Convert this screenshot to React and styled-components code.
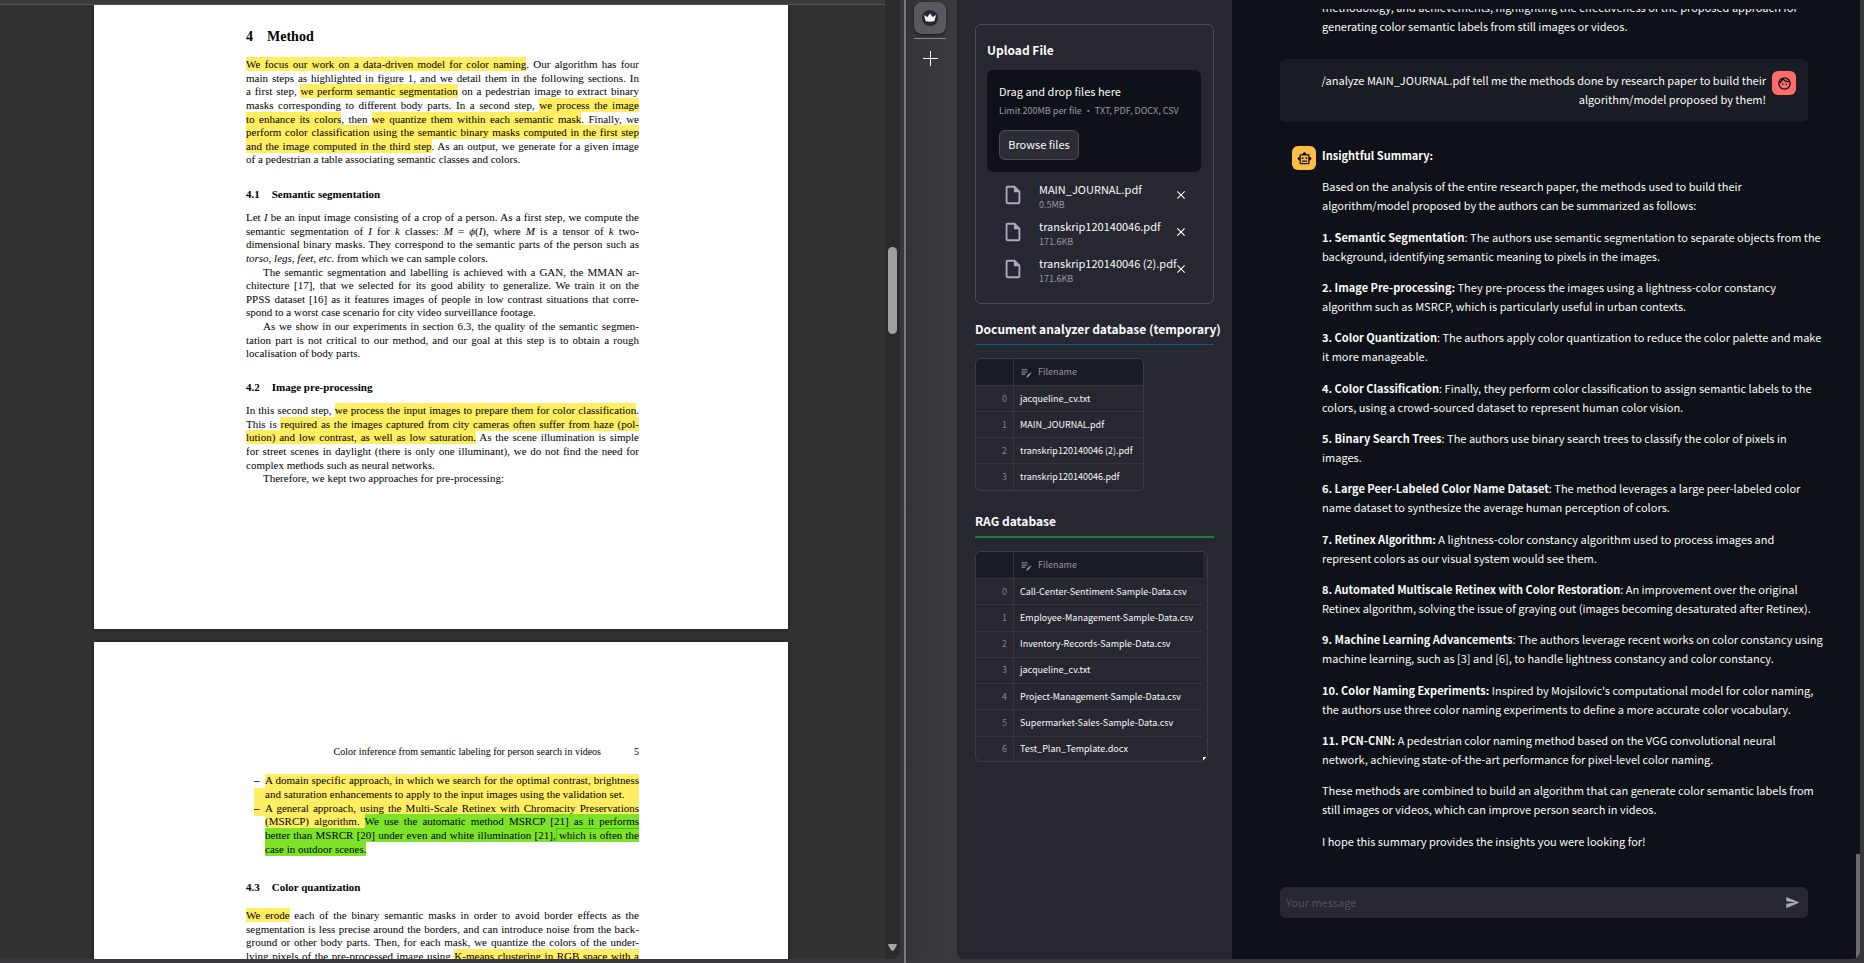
import React from "react";
import styled, { createGlobalStyle, css } from "styled-components";
import {
  MdClose,
  MdEditNote,
  MdOutlineFace,
  MdOutlineInsertDriveFile,
  MdOutlineSmartToy,
  MdSend,
} from "react-icons/md";

const GlobalStyle = createGlobalStyle`
  *, *::before, *::after { box-sizing: border-box; }
  body { margin: 0; background: #38383c; }
  h1, h2, h3, p, ul { margin: 0; padding: 0; }
  ul { list-style: none; }
  button, input { font: inherit; color: inherit; }
`;

const sans = `"Noto Sans CJK SC", "Source Sans Pro", sans-serif`;
const serif = `"Liberation Serif", "Times New Roman", serif`;

const Desktop = styled.div`
  display: grid;
  grid-template-columns: 904fr 2px 958fr;
  height: 100vh;
  overflow: hidden;
  background: #38383c;
`;

/* ---------- PDF viewer ---------- */

const Viewer = styled.section`
  display: flex;
  min-width: 0;
  min-height: 0;
  padding: 0 4px 4px 0;
`;

const ViewerColumn = styled.div`
  flex: 1;
  min-width: 0;
  display: flex;
  flex-direction: column;
  overflow: hidden;
  background: #323232;
`;

const ViewerToolbarEdge = styled.div`
  flex: none;
  height: 5px;
  background: #3b3b3b;
  border-bottom: 1px solid #525252;
`;

const Papers = styled.div`
  flex: 1;
  min-height: 0;
  overflow: hidden;
  display: flex;
  flex-direction: column;
  align-items: center;
  gap: 13px;
  padding-right: 3px;
`;

const Paper = styled.article`
  flex: none;
  width: 694px;
  max-width: 100%;
  padding: ${(p) => p.$pad};
  background: #fff;
  box-shadow: 0 0 5px rgba(0, 0, 0, 0.45);
  font-family: ${serif};
  font-size: 11px;
  line-height: 13px;
  color: #000;
`;

const Heading = styled.h2`
  display: flex;
  gap: ${(p) => (p.$large ? 14 : 12)}px;
  font-size: ${(p) => (p.$large ? 14 : 11)}px;
  line-height: ${(p) => (p.$large ? 16 : 13)}px;
  font-weight: 700;
`;

const TextBlock = styled.div`
  display: flex;
  flex-direction: column;
  justify-content: space-between;
  min-height: ${(p) => p.$height}px;
  margin: ${(p) => p.$margin};
`;

const Line = styled.div`
  white-space: nowrap;
  flex: 1;
  text-align-last: ${(p) => (p.$ragged ? "left" : "justify")};
  padding-left: ${(p) => (p.$indent ? 17 : 0)}px;
`;

const Mark = styled.mark`
  padding: 1px 0;
  color: #000;
  background: ${(p) => (p.$green ? "#7de328" : "#ffee62")};
  ${(p) =>
    p.$outlined &&
    css`
      box-shadow: inset 1px 1px #38cc1c;
    `}
`;

const RunningHead = styled.div`
  display: flex;
  justify-content: flex-end;
  gap: 33px;
  font-size: 10px;
`;

const ListLine = styled.div`
  display: flex;
  margin-left: 8px;
`;

const Dash = styled.span`
  flex: none;
  width: 11px;
  font-weight: 700;
  ${(p) =>
    p.$marked &&
    css`
      background: #ffee62;
      box-shadow: 0 1px #ffee62;
    `}
`;

const ListText = styled(Line)`
  ${(p) =>
    p.$filled &&
    css`
      background: #ffee62;
      box-shadow: 0 1px #ffee62;
    `}
`;

const ScrollTrack = styled.div`
  flex: none;
  width: 15px;
  display: flex;
  flex-direction: column;
  justify-content: space-between;
  align-items: center;
  padding: 247px 0 8px;
  background: #2b2b2b;
  border-radius: 0 0 8px 0;
`;

const ScrollThumb = styled.div`
  width: 9px;
  height: 87px;
  border-radius: 5px;
  background: #9f9f9f;
`;

const Divider = styled.div`
  background: #7b7a78;
`;

/* ---------- Side rail ---------- */

const Browser = styled.section`
  display: flex;
  min-width: 0;
  min-height: 0;
  padding: 0 4px 4px 0;
`;

const Rail = styled.nav`
  flex: none;
  width: 51px;
  display: flex;
  flex-direction: column;
  align-items: center;
  padding: 2px 3px 0 0;
  background: linear-gradient(90deg, #333437, #3a3b3e);
`;

const RailTab = styled.button`
  display: flex;
  align-items: center;
  justify-content: center;
  width: 32px;
  height: 32px;
  padding: 0;
  border: 0;
  border-radius: 8px;
  background: #58595e;
  box-shadow: 0 1px 3px rgba(0, 0, 0, 0.6);
`;

const RailRule = styled.div`
  width: 32px;
  height: 1px;
  margin: 4px 0 12px;
  background: #8b8b8d;
`;

const RailAdd = styled.button`
  display: flex;
  padding: 0;
  border: 0;
  background: none;
`;

/* ---------- Sidebar ---------- */

const AppFrame = styled.div`
  flex: 1;
  min-width: 0;
  display: flex;
  overflow: hidden;
  border-radius: 0 0 8px 8px;
  background: #0e1117;
  font-family: ${sans};
  color: #fafafa;
`;

const Sidebar = styled.aside`
  flex: none;
  width: 275px;
  padding: 24px 18px 0;
  background: #262730;
`;

const UploadCard = styled.section`
  height: 280px;
  padding: 17px 12px 0 11px;
  border: 1px solid #4c4d56;
  border-radius: 6px;
`;

const SideTitle = styled.h3`
  font-size: 12px;
  line-height: 16px;
  font-weight: 700;
  white-space: nowrap;
`;

const DropZone = styled.div`
  display: flex;
  flex-direction: column;
  align-items: flex-start;
  height: 102px;
  margin: 12px 0 6px;
  padding: 12px;
  border-radius: 6px;
  background: #0e1117;
`;

const DropTitle = styled.span`
  font-size: 11px;
  line-height: 18px;
  white-space: nowrap;
`;

const Hint = styled.small`
  font-size: 9px;
  line-height: ${(p) => (p.$tight ? 15 : 22)}px;
  color: #999a9f;
  white-space: nowrap;
`;

const BrowseButton = styled.button`
  width: 80px;
  height: 30px;
  margin-top: 8px;
  padding: 0 0 2px;
  border: 1px solid #4c4d56;
  border-radius: 6px;
  background: #2b2c36;
  font-size: 11px;
  line-height: 16px;
  white-space: nowrap;
`;

const FileList = styled.ul`
  display: flex;
  flex-direction: column;
  gap: 3px;
`;

const FileRow = styled.li`
  display: flex;
  align-items: center;
  height: 34px;
  padding: 0 13px 0 15px;
  color: #a9abc0;
`;

const FileText = styled.div`
  flex: 1;
  min-width: 0;
  display: flex;
  flex-direction: column;
  margin-left: 15px;
  padding-top: 3px;
`;

const FileName = styled.span`
  font-size: 11px;
  line-height: 16px;
  color: #fafafa;
  white-space: nowrap;
`;

const RemoveButton = styled.button`
  display: flex;
  flex: none;
  padding: 0;
  border: 0;
  background: none;
  color: #fafafa;
`;

const DatabaseSection = styled.section`
  margin-top: 17px;
  & + & { margin-top: 22px; }
`;

const Rule = styled.hr`
  height: ${(p) => p.$size}px;
  margin: 7px 0 13px;
  border: 0;
  background: ${(p) => p.$color};
`;

const GridFrame = styled.div`
  position: relative;
  width: ${(p) => p.$width}px;
  max-height: 211px;
  padding-right: ${(p) => (p.$gutter ? 4 : 0)}px;
  border: 1px solid #3b3d46;
  border-radius: 6px;
  overflow: hidden;
`;

const DataTable = styled.table`
  width: 100%;
  height: ${(p) => p.$height}px;
  border-collapse: separate;
  border-spacing: 0;
  table-layout: fixed;
  font-size: 9px;
  line-height: 12px;
`;

const IndexCell = styled.th`
  width: 38px;
  height: ${(p) => (p.$head ? 27 : 26)}px;
  padding: 0 6px 0 0;
  border-right: 1px solid #34353e;
  border-bottom: 1px solid #34353e;
  background: ${(p) => (p.$head ? "#1a1c24" : "transparent")};
  color: #85868c;
  font-weight: 400;
  text-align: right;
  tbody tr:last-child > & { border-bottom-color: transparent; }
`;

const NameHead = styled.th`
  padding: 0 6px;
  border-bottom: 1px solid #34353e;
  background: #1a1c24;
  color: #94959a;
  font-weight: 400;
  text-align: left;
`;

const NameHeadInner = styled.span`
  display: flex;
  align-items: center;
  gap: 5px;
`;

const NameCell = styled.td`
  padding: 0 0 0 6px;
  border-bottom: 1px solid #34353e;
  white-space: nowrap;
  tr:last-child > & { border-bottom-color: transparent; }
`;

const ResizeCorner = styled.span`
  position: absolute;
  right: 0;
  bottom: 0;
  width: 4px;
  height: 4px;
  background: linear-gradient(135deg, #fff 50%, transparent 50%);
`;

/* ---------- Chat ---------- */

const Chat = styled.main`
  position: relative;
  flex: 1;
  min-width: 0;
  display: flex;
  flex-direction: column;
  padding: 9px 52px 41px 48px;
`;

const Feed = styled.div`
  flex: 1;
  min-height: 0;
  display: flex;
  flex-direction: column;
  overflow-x: visible;
  overflow-y: clip;
  padding-bottom: 36px;
  font-size: 11px;
  line-height: 19px;
`;

const Earlier = styled.div`
  flex: none;
  margin: -11px 0 23px;
  padding-left: 42px;
`;

const UserMessage = styled.div`
  flex: none;
  display: flex;
  gap: 6px;
  min-height: 63px;
  padding: 12px;
  border-radius: 6px;
  background: #1a1c24;
  text-align: right;
`;

const BotMessage = styled.div`
  flex: 1;
  display: flex;
  gap: 6px;
  margin-top: 12px;
  padding: 12px 0 0 12px;
`;

const MessageBody = styled.div`
  flex: 1;
  min-width: 0;
  display: flex;
  flex-direction: column;
  justify-content: space-between;
`;

const ChatText = styled.p`
  white-space: pre;
`;

const Avatar = styled.span`
  flex: none;
  display: flex;
  align-items: center;
  justify-content: center;
  width: 24px;
  height: 24px;
  border-radius: 6px;
  background: ${(p) => p.$color};
  color: #0e1117;
`;

const Composer = styled.form`
  flex: none;
  display: flex;
  align-items: center;
  height: 31px;
  padding: 0 8px 0 6px;
  border-radius: 6px;
  background: #262730;
`;

const ComposerInput = styled.input`
  flex: 1;
  min-width: 0;
  padding: 0;
  border: 0;
  outline: 0;
  background: none;
  font-size: 11px;
  line-height: 19px;
  &::placeholder { color: #52545f; opacity: 1; }
`;

const SendButton = styled.button`
  display: flex;
  padding: 0;
  border: 0;
  background: none;
  color: #a3a8b8;
`;

const ChatScrollThumb = styled.div`
  position: absolute;
  right: 0;
  bottom: 0;
  width: 4px;
  height: 105px;
  border-radius: 2px 2px 8px 0;
  background: #6c6d70;
`;

const files = [
  { name: "MAIN_JOURNAL.pdf", size: "0.5MB" },
  { name: "transkrip120140046.pdf", size: "171.6KB" },
  { name: "transkrip120140046 (2).pdf", size: "171.6KB" },
];

const analyzerRows = [
  "jacqueline_cv.txt",
  "MAIN_JOURNAL.pdf",
  "transkrip120140046 (2).pdf",
  "transkrip120140046.pdf",
];

const ragRows = [
  "Call-Center-Sentiment-Sample-Data.csv",
  "Employee-Management-Sample-Data.csv",
  "Inventory-Records-Sample-Data.csv",
  "jacqueline_cv.txt",
  "Project-Management-Sample-Data.csv",
  "Supermarket-Sales-Sample-Data.csv",
  "Test_Plan_Template.docx",
];

const summary = [
  ["Insightful Summary:", ""],
  ["", "Based on the analysis of the entire research paper, the methods used to build their\nalgorithm/model proposed by the authors can be summarized as follows:"],
  ["1. Semantic Segmentation", ": The authors use semantic segmentation to separate objects from the\nbackground, identifying semantic meaning to pixels in the images."],
  ["2. Image Pre-processing:", " They pre-process the images using a lightness-color constancy\nalgorithm such as MSRCP, which is particularly useful in urban contexts."],
  ["3. Color Quantization", ": The authors apply color quantization to reduce the color palette and make\nit more manageable."],
  ["4. Color Classification", ": Finally, they perform color classification to assign semantic labels to the\ncolors, using a crowd-sourced dataset to represent human color vision."],
  ["5. Binary Search Trees", ": The authors use binary search trees to classify the color of pixels in\nimages."],
  ["6. Large Peer-Labeled Color Name Dataset", ": The method leverages a large peer-labeled color\nname dataset to synthesize the average human perception of colors."],
  ["7. Retinex Algorithm:", " A lightness-color constancy algorithm used to process images and\nrepresent colors as our visual system would see them."],
  ["8. Automated Multiscale Retinex with Color Restoration", ": An improvement over the original\nRetinex algorithm, solving the issue of graying out (images becoming desaturated after Retinex)."],
  ["9. Machine Learning Advancements", ": The authors leverage recent works on color constancy using\nmachine learning, such as [3] and [6], to handle lightness constancy and color constancy."],
  ["10. Color Naming Experiments:", " Inspired by Mojsilovic's computational model for color naming,\nthe authors use three color naming experiments to define a more accurate color vocabulary."],
  ["11. PCN-CNN:", " A pedestrian color naming method based on the VGG convolutional neural\nnetwork, achieving state-of-the-art performance for pixel-level color naming."],
  ["", "These methods are combined to build an algorithm that can generate color semantic labels from\nstill images or videos, which can improve person search in videos."],
  ["", "I hope this summary provides the insights you were looking for!"],
];

function Database({ title, ruleColor, ruleSize, width, height, rows, gutter }) {
  return (
    <DatabaseSection>
      <SideTitle>{title}</SideTitle>
      <Rule $color={ruleColor} $size={ruleSize} />
      <GridFrame $width={width} $gutter={gutter}>
        <DataTable $height={height}>
          <thead>
            <tr>
              <IndexCell $head />
              <NameHead>
                <NameHeadInner>
                  <MdEditNote size={13} />
                  Filename
                </NameHeadInner>
              </NameHead>
            </tr>
          </thead>
          <tbody>
            {rows.map((name, i) => (
              <tr key={name}>
                <IndexCell>{i}</IndexCell>
                <NameCell>{name}</NameCell>
              </tr>
            ))}
          </tbody>
        </DataTable>
        {gutter && <ResizeCorner />}
      </GridFrame>
    </DatabaseSection>
  );
}

function PaperOne() {
  return (
    <Paper $pad="24px 149px 143px 152px">
      <Heading $large><span>4</span><span>Method</span></Heading>
      <TextBlock $height={109} $margin="13px 0 21px">
        <Line><Mark>We focus our work on a data-driven model for color naming</Mark>. Our algorithm has four</Line>
        <Line>main steps as highlighted in figure 1, and we detail them in the following sections. In</Line>
        <Line>a first step, <Mark>we perform semantic segmentation</Mark> on a pedestrian image to extract binary</Line>
        <Line>masks corresponding to different body parts. In a second step, <Mark>we process the image</Mark></Line>
        <Line><Mark>to enhance its colors</Mark>, then <Mark>we quantize them within each semantic mask</Mark>. Finally, we</Line>
        <Line><Mark>perform color classification using the semantic binary masks computed in the first step</Mark></Line>
        <Line><Mark>and the image computed in the third step</Mark>. As an output, we generate for a given image</Line>
        <Line $ragged>of a pedestrian a table associating semantic classes and colors.</Line>
      </TextBlock>
      <Heading><span>4.1</span><span>Semantic segmentation</span></Heading>
      <TextBlock $height={150} $margin="10px 0 20px">
        <Line>Let <i>I</i> be an input image consisting of a crop of a person. As a first step, we compute the</Line>
        <Line>semantic segmentation of <i>I</i> for <i>k</i> classes: <i>M</i> = <i>ϕ</i>(<i>I</i>), where <i>M</i> is a tensor of <i>k</i> two-</Line>
        <Line>dimensional binary masks. They correspond to the semantic parts of the person such as</Line>
        <Line $ragged><i>torso, legs, feet, etc.</i> from which we can sample colors.</Line>
        <Line $indent>The semantic segmentation and labelling is achieved with a GAN, the MMAN ar-</Line>
        <Line>chitecture [17], that we selected for its good ability to generalize. We train it on the</Line>
        <Line>PPSS dataset [16] as it features images of people in low contrast situations that corre-</Line>
        <Line $ragged>spond to a worst case scenario for city video surveillance footage.</Line>
        <Line $indent>As we show in our experiments in section 6.3, the quality of the semantic segmen-</Line>
        <Line>tation part is not critical to our method, and our goal at this step is to obtain a rough</Line>
        <Line $ragged>localisation of body parts.</Line>
      </TextBlock>
      <Heading><span>4.2</span><span>Image pre-processing</span></Heading>
      <TextBlock $height={82} $margin="10px 0 0">
        <Line>In this second step, <Mark>we process the input images to prepare them for color classification</Mark>.</Line>
        <Line>This is <Mark>required as the images captured from city cameras often suffer from haze (pol-</Mark></Line>
        <Line><Mark>lution) and low contrast, as well as low saturation.</Mark> As the scene illumination is simple</Line>
        <Line>for street scenes in daylight (there is only one illuminant), we do not find the need for</Line>
        <Line $ragged>complex methods such as neural networks.</Line>
        <Line $indent $ragged>Therefore, we kept two approaches for pre-processing:</Line>
      </TextBlock>
    </Paper>
  );
}

function PaperTwo() {
  return (
    <Paper $pad="103px 149px 40px 152px">
      <RunningHead>
        <span>Color inference from semantic labeling for person search in videos</span>
        <span>5</span>
      </RunningHead>
      <TextBlock $height={82} $margin="16px 0 25px">
        <ListLine><Dash>–</Dash><ListText $filled>A domain specific approach, in which we search for the optimal contrast, brightness</ListText></ListLine>
        <ListLine><Dash $marked /><ListText $filled $ragged>and saturation enhancements to apply to the input images using the validation set.</ListText></ListLine>
        <ListLine><Dash $marked>–</Dash><ListText $filled>A general approach, using the Multi-Scale Retinex with Chromacity Preservations</ListText></ListLine>
        <ListLine><Dash /><ListText><Mark>(MSRCP) algorithm. </Mark><Mark $green>We use the automatic method MSRCP [21] as it performs</Mark></ListText></ListLine>
        <ListLine><Dash /><ListText><Mark $green>better than MSRCR [20] under even and white illumination [21],</Mark><Mark $green $outlined> which is often the</Mark></ListText></ListLine>
        <ListLine><Dash /><ListText $ragged><Mark $green>case in outdoor scenes.</Mark></ListText></ListLine>
      </TextBlock>
      <Heading><span>4.3</span><span>Color quantization</span></Heading>
      <TextBlock $height={54} $margin="15px 0 0">
        <Line><Mark>We erode</Mark> each of the binary semantic masks in order to avoid border effects as the</Line>
        <Line>segmentation is less precise around the borders, and can introduce noise from the back-</Line>
        <Line>ground or other body parts. Then, for each mask, we quantize the colors of the under-</Line>
        <Line>lying pixels of the pre-processed image using <Mark>K-means clustering in RGB space with a</Mark></Line>
      </TextBlock>
    </Paper>
  );
}

export default function App() {
  return (
    <>
      <GlobalStyle />
      <Desktop>
        <Viewer>
          <ViewerColumn>
            <ViewerToolbarEdge />
            <Papers>
              <PaperOne />
              <PaperTwo />
            </Papers>
          </ViewerColumn>
          <ScrollTrack>
            <ScrollThumb />
            <svg width="9" height="7" viewBox="0 0 9 7" aria-hidden="true">
              <path d="M1 0h7q1 0 1 1L6 6q-1.500 2-3 0L0 1q0-1 1-1z" fill="#a6a6a6" />
            </svg>
          </ScrollTrack>
        </Viewer>
        <Divider />
        <Browser>
          <Rail>
            <RailTab aria-label="Workspace">
              <svg width="16" height="16" viewBox="0 0 16 16" aria-hidden="true">
                <circle cx="8" cy="8" r="8" fill="#262730" />
                <path d="M2 5l3.300 2L8 3.500 10.700 7 14 5l-1.600 6Q8 12.600 3.600 11z" fill="#f2f2f2" />
              </svg>
            </RailTab>
            <RailRule />
            <RailAdd aria-label="Add">
              <svg width="15" height="15" viewBox="0 0 15 15" aria-hidden="true">
                <path d="M7.500 0v15M0 7.500h15" stroke="#fff" strokeWidth="1" />
              </svg>
            </RailAdd>
          </Rail>
          <AppFrame>
            <Sidebar>
              <UploadCard>
                <SideTitle>Upload File</SideTitle>
                <DropZone>
                  <DropTitle>Drag and drop files here</DropTitle>
                  <Hint>Limit 200MB per file • TXT, PDF, DOCX, CSV</Hint>
                  <BrowseButton>Browse files</BrowseButton>
                </DropZone>
                <FileList>
                  {files.map((file) => (
                    <FileRow key={file.name}>
                      <MdOutlineInsertDriveFile size={22} />
                      <FileText>
                        <FileName>{file.name}</FileName>
                        <Hint $tight>{file.size}</Hint>
                      </FileText>
                      <RemoveButton aria-label={`Remove ${file.name}`}>
                        <MdClose size={14} />
                      </RemoveButton>
                    </FileRow>
                  ))}
                </FileList>
              </UploadCard>
              <Database
                title="Document analyzer database (temporary)"
                ruleColor="#0f5499"
                ruleSize={1}
                width={169}
                height={131}
                rows={analyzerRows}
              />
              <Database
                title="RAG database"
                ruleColor="#15823b"
                ruleSize={2}
                width={233}
                height={211}
                rows={ragRows}
                gutter
              />
            </Sidebar>
            <Chat>
              <Feed>
                <Earlier>
                  <ChatText>
                    {"methodology, and achievements, highlighting the effectiveness of the proposed approach for\ngenerating color semantic labels from still images or videos."}
                  </ChatText>
                </Earlier>
                <UserMessage>
                  <MessageBody>
                    <ChatText>
                      {"/analyze MAIN_JOURNAL.pdf tell me the methods done by research paper to build their\nalgorithm/model proposed by them!"}
                    </ChatText>
                  </MessageBody>
                  <Avatar $color="#ff6c6c"><MdOutlineFace size={15} /></Avatar>
                </UserMessage>
                <BotMessage>
                  <Avatar $color="#ffbd45"><MdOutlineSmartToy size={15} /></Avatar>
                  <MessageBody>
                    {summary.map(([lead, rest]) => (
                      <ChatText key={lead + rest}>
                        {lead && <strong>{lead}</strong>}
                        {rest}
                      </ChatText>
                    ))}
                  </MessageBody>
                </BotMessage>
              </Feed>
              <Composer onSubmit={(e) => e.preventDefault()}>
                <ComposerInput aria-label="Your message" placeholder="Your message" />
                <SendButton aria-label="Send"><MdSend size={15} /></SendButton>
              </Composer>
              <ChatScrollThumb />
            </Chat>
          </AppFrame>
        </Browser>
      </Desktop>
    </>
  );
}
